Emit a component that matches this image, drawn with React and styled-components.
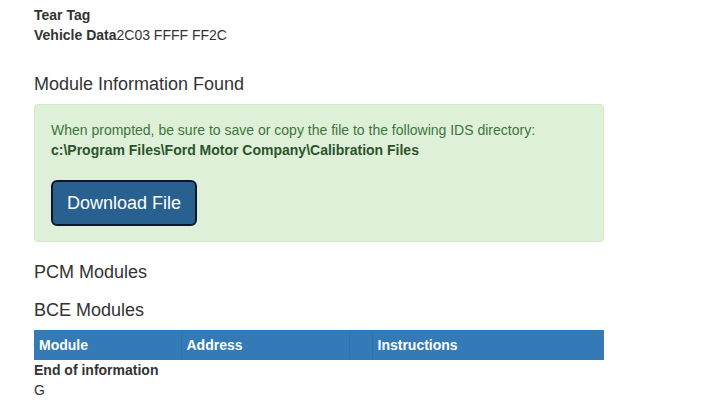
import React from 'react'
import styled, { createGlobalStyle } from 'styled-components'

const GlobalStyle = createGlobalStyle`
    body {
        margin: 0;
        background: #fff;
        font-family: "Liberation Sans", Arial, sans-serif;
        font-size: 14px;
        line-height: 20px;
        color: #333;
    }
`
const Page = styled.div`
    width: 570px;
    padding: 5px 0 0 34px;
`
const Line = styled.div`
    line-height: 20px;
`
const Label = styled.b`
    font-weight: 700;
`
const Heading = styled.h4`
    font-size: 18px;
    font-weight: 500;
    line-height: 20px;
    margin: ${({ $top }) => $top}px 0 10px;
    color: #333;
`
const Alert = styled.div`
    background: #dff0d8;
    border: 1px solid #d6e9c6;
    border-radius: 4px;
    color: #3c763d;
    padding: 15px 15px 15px 16px;
    margin-bottom: 20px;
`
const AlertText = styled.p`
    margin: 0 0 20px;
`
const Path = styled.b`
    color: #2b542c;
`
const DownloadButton = styled.button`
    font-family: "Liberation Sans", Arial, sans-serif;
    font-size: 18px;
    line-height: 24px;
    padding: 9px 14px;
    color: #fff;
    background: #286090;
    border: 2px solid #0b1826;
    border-radius: 6px;
    box-shadow: 0 0 0 1px #e4ebe2;
    cursor: pointer;
`
const Table = styled.table`
    width: 570px;
    margin: 0;
    border-collapse: collapse;
    table-layout: fixed;
`
const Th = styled.th`
    box-sizing: border-box;
    width: ${({ $w }) => $w}px;
    background: #337ab7;
    color: #fff;
    text-align: left;
    font-weight: 700;
    padding: 5px 5px 4px;
    line-height: 20px;
    border-bottom: 1px solid #337ab7;
    border-right: 1px solid #2f72ab;
    &:last-child {
        border-right: none;
    }
`

const App = () => {
    return (
        <Page>
            <GlobalStyle />
            <Line><Label>Tear Tag</Label></Line>
            <Line><Label>Vehicle Data</Label>2C03 FFFF FF2C</Line>
            <Heading $top={29}>Module Information Found</Heading>
            <Alert>
                <AlertText>
                    When prompted, be sure to save or copy the file to the following IDS directory:<br />
                    <Path>c:\Program Files\Ford Motor Company\Calibration Files</Path>
                </AlertText>
                <DownloadButton>Download File</DownloadButton>
            </Alert>
            <Heading $top={0}>PCM Modules</Heading>
            <Heading $top={18}>BCE Modules</Heading>
            <Table>
                <thead>
                    <tr>
                        <Th $w={147}>Module</Th>
                        <Th $w={168}>Address</Th>
                        <Th $w={23}></Th>
                        <Th $w={232}>Instructions</Th>
                    </tr>
                </thead>
            </Table>
            <Line><Label>End of information</Label></Line>
            <Line>G</Line>
        </Page>
    )
}

export default App
